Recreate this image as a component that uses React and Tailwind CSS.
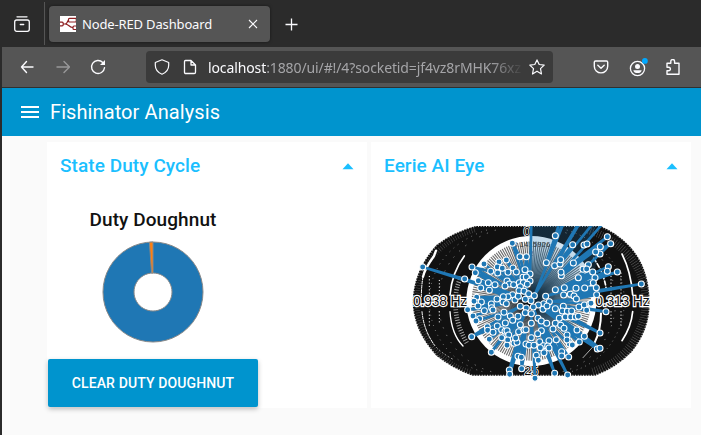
import React from "react";

const CX = 513;
const CY = 513;

// Data points of the radar dataset, in chart units (3 per CSS pixel).
const RAW = `585,317 637,344 671,345 680,342 741,320 751,341 720,350 719,372 706,366
558,398 583,407 599,402 601,389 639,399 603,437 602,427 668,418 684,404 679,417 697,426 744,410 741,424 771,426
654,443 704,443 699,458 708,473 673,474 647,475 612,473 585,479 843,462 709,494 610,495 630,493 641,498 648,507
456,340 479,380 498,380 438,390 416,396 371,402 411,411 426,415 458,414 391,424 412,429 443,427 468,426 494,419 509,432
335,411 345,428 187,411 313,447 354,452 384,458 404,464 361,474 387,481 440,453 447,462 434,468 460,464 477,458 488,442 498,441 509,453 489,458
480,470 501,463 476,482 491,484 505,491 522,497 457,494 443,500 429,500 410,507 349,502 341,514 363,516 393,522 353,528 394,533 428,516 438,521 464,510 474,499 512,512 495,508
322,539 372,542 338,558 358,566 347,573 398,540 431,547 450,558 413,561 435,579 480,529 498,534 473,559 457,571 495,548 513,551
334,620 381,590 382,601 398,607 411,588 424,599 434,604 440,602 424,623 387,628 393,667 445,615 442,630 440,646 461,640 470,637 466,624 475,605
480,584 491,600 497,599 513,580 513,623 497,642 506,646 521,646 473,679 483,682 484,716 447,720 448,733
556,499 567,515 550,521 534,525 548,538 560,528 519,531 585,536 609,529 606,543 621,544 634,543 656,531 672,525 688,522 679,541 737,545 692,520
597,565 615,561 631,561 645,561 654,559 533,565 543,573 559,580 585,580 578,597 601,586 611,595 650,600 719,609 672,619 657,636
543,602 532,611 538,635 566,632 588,629 549,647 562,648 620,615 626,632 627,642 620,630 711,657 719,655
551,668 528,676 534,691 604,665 604,678 625,681 583,730 622,735 524,745 566,654 636,645 540,653`;

const rad = (d) => (d * Math.PI) / 180;
const polar = (deg, r) => [CX + Math.sin(rad(deg)) * r, CY - Math.cos(rad(deg)) * r];
const angleOf = ([x, y]) => (Math.atan2(x - CX, CY - y) + 2 * Math.PI) % (2 * Math.PI);

const visible = RAW.trim().split(/\s+/).map((p) => p.split(",").map(Number));
const peaks = [[0.7, 420], [18.9, 400], [22.3, 400], [31.4, 420], [38.7, 420], [42.4, 400]].map(([a, r]) => polar(a, r));
const outline = [...visible, ...peaks].sort((a, b) => angleOf(a) - angleOf(b));

// Dense ring made by the crowded axis labels.
const BAND = "M345 288H720Q770 308 810 350Q868 415 868 520Q868 600 815 665Q770 712 705 737H336Q275 715 228 677Q157 600 157 513Q160 420 228 345Q280 305 345 288Z";
const LEFT_ARC = "M345 300C235 335 172 415 172 513C172 610 235 700 335 726";
const RIGHT_ARC = "M681 300C791 335 854 415 854 513C854 610 791 700 691 726";

function Radar() {
  return (
    <svg className="block h-[156px] w-[250px]" viewBox="140 288 750 468" overflow="hidden">
      <path d={BAND} fill="#111" />
      <path d={BAND} fill="none" stroke="#fff" strokeWidth="6" strokeDasharray="3 5" strokeOpacity="0.8" />
      <g fill="none" stroke="#fff" strokeDasharray="1.5 6">
        <path d={LEFT_ARC} strokeWidth="14" strokeOpacity="0.28" transform="translate(-2 0)" />
        <path d={RIGHT_ARC} strokeWidth="24" strokeOpacity="0.32" transform="translate(2 0)" />
        <path d={LEFT_ARC} strokeWidth="3" strokeDasharray="3 13" strokeOpacity="0.4" transform="translate(35 0)" />
        <path d={LEFT_ARC} strokeWidth="3" strokeDasharray="4 21" strokeOpacity="0.4" transform="translate(62 0)" />
        <path d="M302 440Q286 475 286 505M286 530Q286 580 320 640" strokeWidth="14" strokeDasharray="3 5" strokeOpacity="0.6" />
        <path d={RIGHT_ARC} strokeWidth="3" strokeDasharray="3 11" strokeOpacity="0.4" transform="translate(-62 0)" />
        <path d={RIGHT_ARC} strokeWidth="3" strokeDasharray="4 19" strokeOpacity="0.4" transform="translate(-88 0)" />
      </g>
      <g fill="none" stroke="#fff" strokeLinecap="round">
        <path d="M227 362L221 378Q194 415 188 440" strokeWidth="7" />
        <path d="M188 440Q183 470 183 500M185 545Q190 600 222 645" strokeWidth="3" strokeDasharray="9 4" />
        <path d="M222 645Q240 668 282 690" strokeWidth="2" strokeDasharray="3 8" />
        <path d="M312 378C284 415 272 460 269 495" strokeWidth="5" />
        <path d="M269 545C272 590 285 625 308 648" strokeWidth="4" />
        <path d="M785 372Q812 425 817 495M817 545Q813 590 785 632" strokeWidth="5" />
        <path d="M700 385Q732 430 738 480" strokeWidth="5" strokeDasharray="12 7" />
        <path d="M722 550Q722 600 702 640" strokeWidth="6" />
        <path d="M700 648L668 683" strokeWidth="2" />
        <path d="M207 490V430M237 492V445M752 490V430M782 490V420M207 545V590M237 545V580M752 545V580M782 545V590" strokeWidth="3" strokeDasharray="1 9" />
      </g>
      <circle cx={CX} cy={CY} r="195" fill="#fff" />
      <g fill="#111" stroke="#fff" strokeWidth="7" paintOrder="stroke" fontFamily="'Liberation Sans', Arial, sans-serif" fontSize="42">
        <text x="705" y="528" textLength="163">0.313 Hz</text>
        <text x="158" y="528" textLength="163">0.938 Hz</text>
        <text x="511" y="319" textAnchor="end" fontSize="38" strokeWidth="4">0</text>
        <text x="492" y="735" fontSize="38" strokeWidth="5">25</text>
      </g>
      <g stroke="#000" strokeOpacity="0.58" strokeWidth="3.4">
        {Array.from({ length: 160 }, (_, i) => {
          const [x, y] = polar(i * 2.25, 179);
          return <line key={i} x1={CX} y1={CY} x2={x} y2={y} />;
        })}
      </g>
      <defs>
        <radialGradient id="pupil" gradientUnits="userSpaceOnUse" cx={CX} cy={CY} r="190">
          <stop offset="0" stopColor="#0f2231" stopOpacity="0.95" />
          <stop offset="0.35" stopColor="#1c4562" stopOpacity="0.6" />
          <stop offset="0.85" stopColor="#1f77b4" stopOpacity="0.2" />
          <stop offset="1" stopColor="#1f77b4" stopOpacity="0.2" />
        </radialGradient>
      </defs>
      <path d="M513 513V270H720L660 365L715 345L703 430Z" fill="url(#pupil)" />
      <path d="M513 513L620 470L640 590L560 600Z" fill="url(#pupil)" />
      <g fontFamily="'Liberation Sans', Arial, sans-serif">
        <text x="458" y="350" fontSize="22" textLength="112" fill="#333">3.1415926</text>
        <text x="507" y="379" fontSize="21" fill="#555">2</text>
      </g>
      <polygon points={outline.map((p) => p.join(",")).join(" ")} fill="#1f77b4" fillOpacity="0.08" stroke="#1f77b4" strokeWidth="8" strokeLinejoin="round" />
      <g fill="#1f77b4" stroke="#fff" strokeWidth="3.2">
        {visible.map(([x, y], i) => (
          <circle key={i} cx={x} cy={y} r="9" />
        ))}
      </g>
    </svg>
  );
}

function Doughnut() {
  return (
    <svg className="mt-[8px] h-[104px] w-[104px]" viewBox="-52 -52 104 104">
      <g stroke="#888" strokeWidth="1">
        <path fillRule="evenodd" fill="#1f77b4" d="M0-50A50 50 0 1 1-.01-50ZM0-19A19 19 0 1 0 .01-19Z" />
        <path fill="#ff7f0e" d="M0-50A50 50 0 0 0-3.6-49.8L-1.4-19Q-.7-19 0-19Z" />
      </g>
    </svg>
  );
}

function Card({ title, children }) {
  return (
    <section className="flex h-[266px] w-80 flex-col bg-white">
      <header className="flex h-12 shrink-0 items-center justify-between px-[13px] text-[19px] font-medium text-[#1bbfff]">
        <h2 className="tracking-[0.07px]">{title}</h2>
        <svg className="mt-px h-[7px] w-3" viewBox="0 0 12 7"><path d="M6 .3L11.5 6.3H.5Z" fill="currentColor" /></svg>
      </header>
      {children}
    </section>
  );
}

function TabBar() {
  return (
    <div className="flex h-[47px] bg-[#2b2b2b] text-[#fbfbfe]">
      <div className="my-[2px] flex w-[43px] items-center justify-center border-r border-[#555]">
        <svg className="-ml-[3px] h-4 w-4" viewBox="0 0 16 16" fill="none" stroke="currentColor" strokeWidth="1.3" strokeLinecap="round">
          <path d="M3 .8H13" /><rect x=".7" y="4" width="14.6" height="11.3" rx="2" /><path d="M6.3 8.5H9.7" />
        </svg>
      </div>
      <div className="ml-1 mt-[6px] flex h-9 w-[221px] items-center rounded bg-[#555] pl-[11px] shadow-[0_0_3px_rgba(0,0,0,0.5)]">
        <svg className="h-4 w-4 bg-white" viewBox="0 0 16 16" fill="none" stroke="#8f1f22" strokeWidth="1.2">
          <path d="M3 8H5C8 8 7 4 9 4M5 8C9 8 9 11.5 13 11.5" /><rect x="-1" y="6.2" width="4.2" height="3.6" rx="1" /><rect x="8.5" y="2.3" width="7.8" height="3.7" rx="1" /><rect x="13" y="10" width="4" height="3.5" rx="1" />
        </svg>
        <span className="ml-[6px] mt-px w-[131px] whitespace-nowrap font-['Noto_Sans',sans-serif] text-[13px] tracking-[-0.15px]">Node-RED Dashboard</span>
        <svg className="ml-[35px] h-[10px] w-[10px]" viewBox="0 0 10 10" stroke="currentColor" strokeWidth="1.1"><path d="M1 1L9 9M9 1L1 9" /></svg>
      </div>
      <svg className="ml-[15px] mt-[18px] h-[13px] w-[13px]" viewBox="0 0 13 13" stroke="currentColor" strokeWidth="1.3"><path d="M6.5 .5V12.5M.5 6.5H12.5" /></svg>
    </div>
  );
}

function Toolbar() {
  return (
    <div className="flex h-[41px] items-center border-b border-[#303030] bg-[#555] pl-4 text-[#fbfbfe]">
      <svg className="h-4 w-4" viewBox="0 0 16 16" fill="none" stroke="currentColor" strokeWidth="1.4" strokeLinecap="round" strokeLinejoin="round"><path d="M15 8H3.5M8.5 2.5L3.5 8L8.5 13.5" /></svg>
      <svg className="ml-5 h-4 w-4 opacity-40" viewBox="0 0 16 16" fill="none" stroke="currentColor" strokeWidth="1.4" strokeLinecap="round" strokeLinejoin="round"><path d="M3 8H15.5M10 2.5L15.5 8L10 13.5" /></svg>
      <svg className="ml-5 h-4 w-4" viewBox="0 0 16 16" fill="none" stroke="currentColor" strokeWidth="1.4" strokeLinecap="round"><path d="M14.5 8.7A6.5 6.5 0 1 1 12.8 3.6" /><path d="M15 1V6H10Z" fill="currentColor" stroke="none" /></svg>
      <div className="ml-10 flex h-8 w-[407px] items-center rounded bg-[#3b3b3b] pl-2">
        <svg className="h-4 w-4 shrink-0" viewBox="0 0 16 16" fill="none" stroke="currentColor" strokeWidth="1.2" strokeLinejoin="round"><path d="M8 .8L14.7 3.5V6.3C14.7 10.6 12.3 13.5 8 15.2C3.7 13.5 1.3 10.6 1.3 6.3V3.5Z" /></svg>
        <svg className="ml-3 h-4 w-4 shrink-0" viewBox="0 0 16 16" fill="none" stroke="currentColor" strokeWidth="1.3" strokeLinejoin="round"><path d="M3.5 1.5H9L13.5 6V13.2Q13.5 14.5 12.2 14.5H3.8Q2.5 14.5 2.5 13.2V2.5Q2.5 1.5 3.5 1.5ZM9 1.5V6H13.5" /></svg>
        <div className="ml-[10px] w-[313px] shrink-0 overflow-hidden whitespace-nowrap font-['Noto_Sans',sans-serif] text-[14px] tracking-[-0.11px] text-[#a5a5a8] [mask-image:linear-gradient(to_right,#000_90%,transparent_101%)]">
          <span className="text-[#fbfbfe]">localhost</span>:1880/ui/#!/4?socketid=jf4vz8rMHK76xz
        </div>
        <svg className="ml-[8px] h-4 w-4 shrink-0" viewBox="0 0 16 16" fill="none" stroke="currentColor" strokeWidth="1.2" strokeLinejoin="round"><path d="M8 .9L10.2 5.5L15.2 6.1L11.5 9.6L12.5 15L8 12.2L3.5 15L4.5 9.6L.8 6.1L5.8 5.5Z" /></svg>
      </div>
      <svg className="ml-10 h-4 w-4" viewBox="0 0 16 16" fill="none" stroke="currentColor" strokeWidth="1.3" strokeLinecap="round" strokeLinejoin="round"><path d="M2.5 2H13.5Q14.7 2 14.7 3.2V7.2A6.7 6.7 0 0 1 1.3 7.2V3.2Q1.3 2 2.5 2ZM4.8 6.3L8 9.3L11.2 6.3" strokeWidth="1.4" /></svg>
      <svg className="-mt-px ml-[19px] h-5 w-5" viewBox="-1 -3 20 20"><circle cx="8.5" cy="8.5" r="7.1" fill="none" stroke="currentColor" strokeWidth="1.3" /><circle cx="8.5" cy="6.6" r="2.5" fill="currentColor" /><path d="M4.3 10.2H12.7Q12 13.1 8.5 13.1Q5 13.1 4.3 10.2Z" fill="currentColor" /><circle cx="15.9" cy=".9" r="2.9" fill="#00a8ff" /></svg>
      <svg className="ml-[17px] h-4 w-4" viewBox="0 0 16 16" fill="none" stroke="currentColor" strokeWidth="1.4" strokeLinejoin="round"><path d="M5.8 4.2V2.4A1.9 1.9 0 0 1 9.6 2.4V4.2H14V15.2H2V11.8H3.6A1.8 1.8 0 0 0 3.6 8.2H2V4.2Z" /></svg>
    </div>
  );
}

export default function App() {
  return (
    <div className="flex h-[435px] w-[701px] overflow-hidden bg-[#2b2b2b] font-[Roboto,sans-serif]">
      <div className="w-[2px] shrink-0" />
      <div className="flex w-[699px] flex-col">
        <TabBar />
        <Toolbar />
        <div className="flex h-12 shrink-0 items-center bg-[#0094ce] pl-[19px] text-white">
          <svg className="h-3 w-[18px]" viewBox="0 0 18 12" fill="currentColor"><path d="M0 0H18V2H0ZM0 5H18V7H0ZM0 10H18V12H0Z" /></svg>
          <h1 className="ml-[11px] text-[20px] tracking-[0.09px]">Fishinator Analysis</h1>
        </div>
        <main className="flex flex-1 items-start gap-1 bg-[#fafafa] pl-[45px] pt-[6px]">
          <Card title="State Duty Cycle">
            <div className="ml-px mt-[17px] flex w-[210px] flex-col items-center">
              <h3 className="text-[19px] font-medium leading-[25px] tracking-[0.08px] text-[#111]">Duty Doughnut</h3>
              <Doughnut />
              <button className="mt-[15px] h-12 w-[210px] rounded-[2px] bg-[#0094ce] text-[14px] font-medium uppercase tracking-[0.12px] text-white shadow-[0_2px_5px_rgba(0,0,0,0.26)]">Clear Duty Doughnut</button>
            </div>
          </Card>
          <Card title="Eerie AI Eye">
            <div className="ml-[36px] mt-[36px]"><Radar /></div>
          </Card>
        </main>
      </div>
    </div>
  );
}
